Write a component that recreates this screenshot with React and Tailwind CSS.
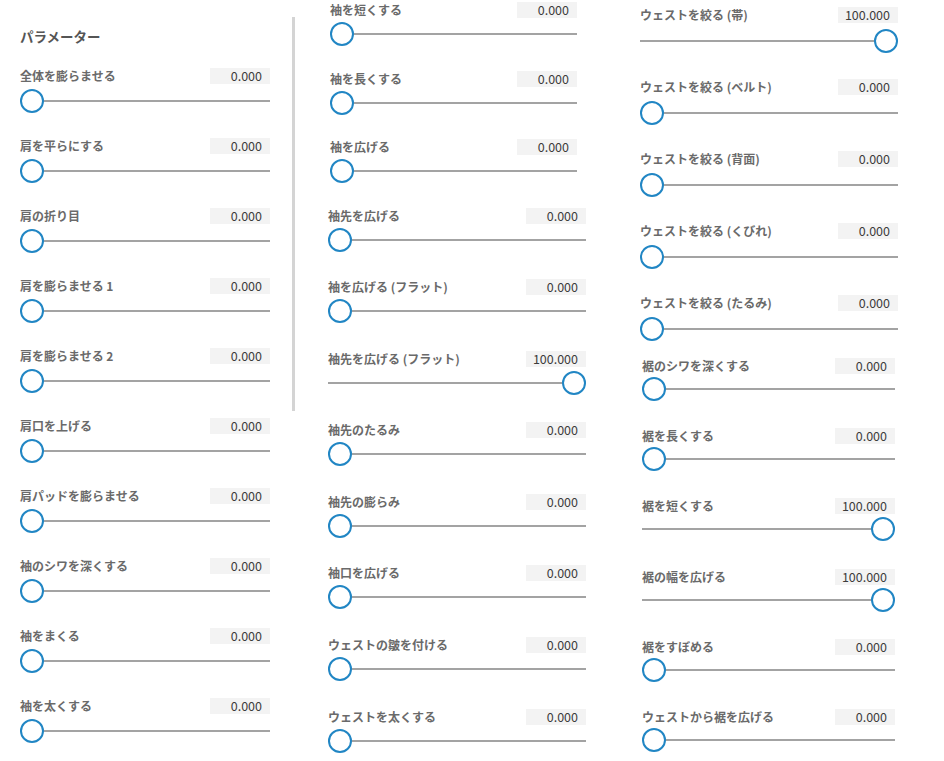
import React from "react";

const FONT = { fontFamily: '"Noto Sans CJK JP", "Noto Sans", sans-serif' };

// 各列のパラメーター（スクリーンショットごとに少しずつ寸法が違う）
const col1 = [
  "全体を膨らませる",
  "肩を平らにする",
  "肩の折り目",
  "肩を膨らませる 1",
  "肩を膨らませる 2",
  "肩口を上げる",
  "肩パッドを膨らませる",
  "袖のシワを深くする",
  "袖をまくる",
  "袖を太くする",
].map((label) => ({ label, value: 0 }));

const col2a = ["袖を短くする", "袖を長くする", "袖を広げる"].map((label) => ({ label, value: 0 }));

const col2b = [
  { label: "袖先を広げる", value: 0 },
  { label: "袖を広げる (フラット)", value: 0 },
  { label: "袖先を広げる (フラット)", value: 100 },
  { label: "袖先のたるみ", value: 0 },
  { label: "袖先の膨らみ", value: 0 },
  { label: "袖口を広げる", value: 0 },
  { label: "ウェストの皺を付ける", value: 0 },
  { label: "ウェストを太くする", value: 0 },
];

const col3a = [
  { label: "ウェストを絞る (帯)", value: 100 },
  { label: "ウェストを絞る (ベルト)", value: 0 },
  { label: "ウェストを絞る (背面)", value: 0 },
  { label: "ウェストを絞る (くびれ)", value: 0 },
  { label: "ウェストを絞る (たるみ)", value: 0 },
];

const col3b = [
  { label: "裾のシワを深くする", value: 0 },
  { label: "裾を長くする", value: 0 },
  { label: "裾を短くする", value: 100 },
  { label: "裾の幅を広げる", value: 100 },
  { label: "裾をすぼめる", value: 0 },
  { label: "ウェストから裾を広げる", value: 0 },
];

function ParamRow({ label, value, rowClass, gapClass }) {
  return (
    <div className={rowClass + " shrink-0"}>
      <div className="flex h-4 items-center justify-between">
        <span className="text-[12px] font-bold leading-4 text-[#6a6a6a] whitespace-nowrap">{label}</span>
        <span className="flex h-4 w-[60px] items-center justify-end bg-[#f3f3f3] pr-2 text-[12.5px] leading-4 text-[#3c3c3c]">
          {value.toFixed(3)}
        </span>
      </div>
      <div className={"relative h-6 " + gapClass}>
        <div className="absolute left-0 right-0 top-[11px] h-[2px] bg-[#a3a3a3]" />
        <div
          className={
            "absolute top-0 h-6 w-6 rounded-full border-2 border-[#2186c4] bg-white " +
            (value >= 100 ? "right-0" : "left-0")
          }
        />
      </div>
    </div>
  );
}

export default function App() {
  return (
    <div className="flex h-[761px] w-[944px] overflow-hidden bg-white" style={FONT}>
      {/* 左列 */}
      <div className="ml-[20px] w-[250px] shrink-0 pt-[26px]">
        <div className="mb-[22px] h-5 text-[13.5px] font-bold leading-5 text-[#555]">パラメーター</div>
        {col1.map((p) => (
          <ParamRow key={p.label} {...p} rowClass="h-[70px]" gapClass="mt-[5px]" />
        ))}
      </div>

      {/* 区切り線 */}
      <div className="ml-[22px] mt-[17px] h-[394px] w-[3px] shrink-0 bg-[#d4d4d4]" />

      {/* 中央列 */}
      <div className="ml-[33px] w-[259px] shrink-0">
        <div className="ml-[2px] w-[247px] pt-[2px]">
          {col2a.map((p) => (
            <ParamRow key={p.label} {...p} rowClass="h-[68.5px]" gapClass="mt-1" />
          ))}
        </div>
        <div className="w-[258px]">
          {col2b.map((p) => (
            <ParamRow key={p.label} {...p} rowClass="h-[71.6px]" gapClass="mt-1" />
          ))}
        </div>
      </div>

      {/* 右列 */}
      <div className="ml-[53px] w-[258px] shrink-0">
        <div className="flex h-[358px] w-[258px] flex-col pt-[7px]">
          {col3a.map((p) => (
            <ParamRow key={p.label} {...p} rowClass="h-[72px]" gapClass="mt-[6px]" />
          ))}
        </div>
        <div className="ml-[2px] w-[253px]">
          {col3b.map((p) => (
            <ParamRow key={p.label} {...p} rowClass="h-[70.2px]" gapClass="mt-[3px]" />
          ))}
        </div>
      </div>
    </div>
  );
}
